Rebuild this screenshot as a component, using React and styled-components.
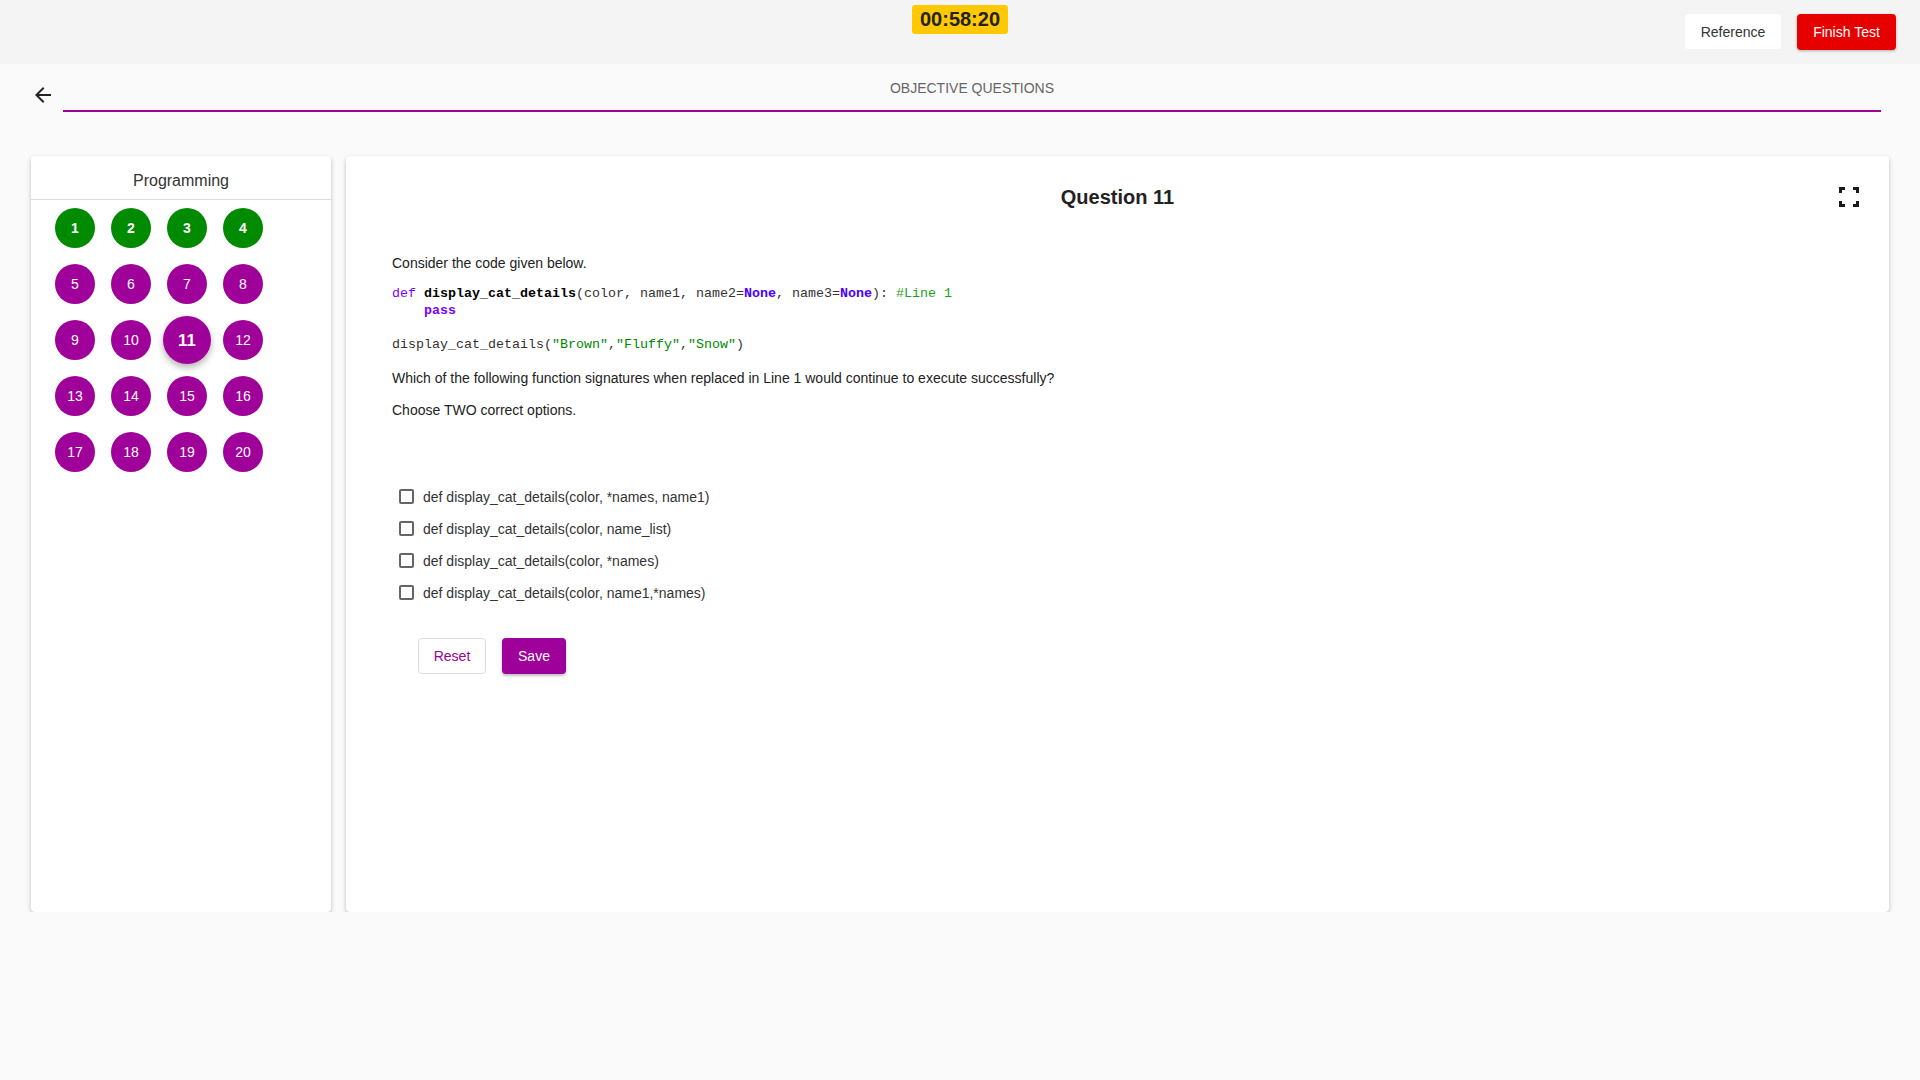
import React from 'react'
import styled, { createGlobalStyle, css } from 'styled-components'

const GlobalStyle = createGlobalStyle`
body {
  margin: 0;
  background: #fafafa;
  font-family: "Liberation Sans", Arial, sans-serif;
  color: #333;
}
`

const questions = Array.from({ length: 20 }, (_, i) => ({
  num: i + 1,
  answered: i < 4,
}))

const options = [
  'def display_cat_details(color, *names, name1)',
  'def display_cat_details(color, name_list)',
  'def display_cat_details(color, *names)',
  'def display_cat_details(color, name1,*names)',
]

const BackIcon = () => (
  <svg width="24" height="24" viewBox="0 0 24 24">
    <path fill="#222" d="M20 11H7.83l5.59-5.59L12 4l-8 8 8 8 1.41-1.41L7.83 13H20v-2z" />
  </svg>
)

const FullscreenIcon = () => (
  <svg width="20" height="20" viewBox="0 0 20 20">
    <path
      fill="#1a1a1a"
      d="M0 0h6v3H3v3H0z M14 0h6v6h-3V3h-3z M0 14h3v3h3v3H0z M17 14h3v6h-6v-3h3z"
    />
  </svg>
)

const App = () => {
  return (
    <>
      <GlobalStyle />
      <Header>
        <div />
        <Timer>00:58:20</Timer>
        <HeaderActions>
          <RefButton>Reference</RefButton>
          <FinishButton>Finish Test</FinishButton>
        </HeaderActions>
      </Header>

      <SubHeader>
        <BackButton>
          <BackIcon />
        </BackButton>
        <SectionTitle>OBJECTIVE QUESTIONS</SectionTitle>
      </SubHeader>

      <Main>
        <SidePanel>
          <SideTitle>Programming</SideTitle>
          <Grid>
            {questions.map((q) => (
              <Bubble key={q.num} answered={q.answered} active={q.num === 11}>
                {q.num}
              </Bubble>
            ))}
          </Grid>
        </SidePanel>

        <QuestionPanel>
          <QuestionHead>
            <div />
            <QuestionTitle>Question 11</QuestionTitle>
            <ExpandButton>
              <FullscreenIcon />
            </ExpandButton>
          </QuestionHead>

          <Content>
            <Para gap={0.5}>Consider the code given below.</Para>
            <Code>
              <Kw>def</Kw> <Fn>display_cat_details</Fn>(color, name1, name2=<NoneKw>None</NoneKw>, name3=<NoneKw>None</NoneKw>): <Comment>#Line 1</Comment>
              {'\n    '}
              <Kw bold>pass</Kw>
              {'\n\n'}
              display_cat_details(<Str>"Brown"</Str>,<Str>"Fluffy"</Str>,<Str>"Snow"</Str>)
            </Code>
            <Para gap={14.5}>
              Which of the following function signatures when replaced in Line 1 would continue to execute successfully?
            </Para>
            <Para gap={12}>Choose TWO correct options.</Para>

            <OptionList>
              {options.map((o) => (
                <OptionRow key={o}>
                  <Box type="checkbox" />
                  <span>{o}</span>
                </OptionRow>
              ))}
            </OptionList>

            <Actions>
              <ResetButton>Reset</ResetButton>
              <SaveButton>Save</SaveButton>
            </Actions>
          </Content>
        </QuestionPanel>
      </Main>
    </>
  )
}

export default App

const Header = styled.div`
height: 64px;
background: #f4f4f4;
display: grid;
grid-template-columns: 1fr auto 1fr;
align-items: start;
`

const Timer = styled.div`
margin-top: 5px;
height: 29px;
width: 96px;
line-height: 29px;
text-align: center;
background: #ffc800;
border-radius: 3px;
font-size: 20px;
font-weight: 700;
color: #222;
`

const HeaderActions = styled.div`
display: flex;
justify-content: flex-end;
gap: 16px;
margin-top: 14px;
padding-right: 24px;
`

const headerBtn = css`
height: 35px;
border: none;
border-radius: 3px;
font-family: "Liberation Sans", Arial, sans-serif;
font-size: 14px;
cursor: pointer;
`

const RefButton = styled.button`
${headerBtn}
width: 96px;
background: #fff;
color: #333;
`

const FinishButton = styled.button`
${headerBtn}
width: 99px;
height: 36px;
background: #e60000;
color: #fff;
border-radius: 4px;
box-shadow: 0 1px 3px rgba(0, 0, 0, 0.3);
`

const SubHeader = styled.div`
display: flex;
align-items: flex-end;
gap: 8px;
padding: 0 39px 0 31px;
`

const BackButton = styled.div`
width: 24px;
height: 24px;
margin-bottom: 5px;
display: flex;
`

const SectionTitle = styled.div`
flex: 1;
margin-top: 14px;
padding-bottom: 12px;
line-height: 20px;
text-align: center;
font-size: 14px;
color: #666;
border-bottom: 2px solid #a10097;
`

const Main = styled.div`
display: flex;
gap: 15px;
padding: 44px 31px 0 31px;
`

const panel = css`
height: 756px;
background: #fff;
border-radius: 4px;
box-shadow: 0 2px 4px rgba(0, 0, 0, 0.25);
box-sizing: border-box;
`

const SidePanel = styled.div`
${panel}
width: 300px;
flex-shrink: 0;
`

const SideTitle = styled.div`
height: 44px;
box-sizing: border-box;
padding-top: 6px;
line-height: 38px;
text-align: center;
font-size: 16px;
color: #333;
border-bottom: 1px solid #ddd;
`

const Grid = styled.div`
display: grid;
grid-template-columns: repeat(4, 40px);
gap: 16px;
padding: 8px 24px;
`

const Bubble = styled.div`
width: 40px;
height: 40px;
border-radius: 50%;
display: flex;
align-items: center;
justify-content: center;
font-size: 14px;
color: #fff;
background: ${(p) => (p.answered ? '#008a00' : '#a0009a')};
font-weight: ${(p) => (p.answered ? 700 : 400)};
${(p) =>
  p.active &&
  css`
    transform: scale(1.2);
    font-weight: 700;
    box-shadow: 0 3px 6px rgba(0, 0, 0, 0.3);
  `}
`

const QuestionPanel = styled.div`
${panel}
flex: 1;
padding-top: 29px;
`

const QuestionHead = styled.div`
display: grid;
grid-template-columns: 1fr auto 1fr;
align-items: center;
padding: 0 30px;
`

const QuestionTitle = styled.div`
font-size: 20px;
font-weight: 700;
line-height: 24px;
color: #222;
`

const ExpandButton = styled.div`
justify-self: end;
display: flex;
`

const Content = styled.div`
padding: 43px 46px 0 46px;
`

const Para = styled.p`
margin: ${(p) => (p.gap || 0)}px 0 0 0;
font-size: 14px;
line-height: 20px;
color: #222;
`

const Code = styled.pre`
margin: 12.5px 0 0 0;
font-family: "Liberation Mono", "Courier New", monospace;
font-size: 13.33px;
line-height: 17px;
color: #333;
`

const Kw = styled.span`
color: #7a00ff;
font-weight: ${(p) => (p.bold ? 700 : 400)};
`

const NoneKw = styled.span`
color: #4d00ff;
font-weight: 700;
`

const Fn = styled.span`
color: #000;
font-weight: 700;
`

const Comment = styled.span`
color: #1aa01a;
`

const Str = styled.span`
color: #008800;
`

const OptionList = styled.div`
margin-top: 61px;
display: flex;
flex-direction: column;
`

const OptionRow = styled.label`
height: 32px;
display: flex;
align-items: center;
gap: 9px;
padding-left: 7px;
font-size: 14px;
color: #333;
`

const Box = styled.input`
appearance: none;
margin: 0;
width: 15px;
height: 15px;
border: 2px solid #666;
border-radius: 2px;
box-sizing: border-box;
background: #fff;
`

const Actions = styled.div`
display: flex;
gap: 16px;
margin-top: 29px;
padding-left: 26px;
`

const actionBtn = css`
height: 36px;
border-radius: 4px;
font-family: "Liberation Sans", Arial, sans-serif;
font-size: 14px;
cursor: pointer;
`

const ResetButton = styled.button`
${actionBtn}
width: 68px;
background: #fff;
color: #a0009a;
border: 1px solid #ddd;
`

const SaveButton = styled.button`
${actionBtn}
width: 64px;
background: #a0009a;
color: #fff;
border: none;
box-shadow: 0 2px 3px rgba(0, 0, 0, 0.25);
`
